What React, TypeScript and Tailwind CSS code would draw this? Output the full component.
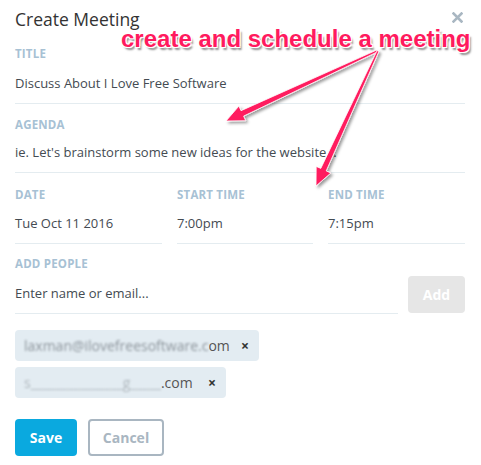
import React from "react";

const label = "text-[11.5px] font-bold uppercase text-[#a7c1d4] tracking-[0.2px] leading-none";
const value = "text-[13px] text-[#444b52] leading-none";

export default function App() {
  return (
    <div className="relative w-[481px] h-[465px] bg-white overflow-hidden font-['Open_Sans',sans-serif]">
      <div className="pl-[15px] pr-[16px] pt-[9px]">
        <div className="flex items-start justify-between">
          <div className="text-[17.5px] text-[#333] leading-[20px]">Create Meeting</div>
          <div className="mt-[3px] mr-[2px] text-[#a9b7c2]">
            <svg width="11" height="11" viewBox="0 0 11 11">
              <path d="M1.5 1.5 L9.5 9.5 M9.5 1.5 L1.5 9.5" stroke="#a9b7c2" strokeWidth="2.6" strokeLinecap="square" />
            </svg>
          </div>
        </div>

        <div className={`${label} mt-[19px]`}>Title</div>
        <div className={`${value} mt-[17px] pb-[13px] border-b border-[#e4ecf0]`}>Discuss About I Love Free Software</div>

        <div className={`${label} mt-[15px]`}>Agenda</div>
        <div className={`${value} mt-[16px] pb-[13px] border-b border-[#e4ecf0]`}>ie. Let's brainstorm some new ideas for the website...</div>

        <div className="flex mt-[16px]">
          <div className="w-[147px]">
            <div className={label}>Date</div>
            <div className={`${value} mt-[16px] pb-[13px] border-b border-[#e4ecf0]`}>Tue Oct 11 2016</div>
          </div>
          <div className="w-[136px] ml-[15px]">
            <div className={label}>Start Time</div>
            <div className={`${value} mt-[16px] pb-[13px] border-b border-[#e4ecf0]`}>7:00pm</div>
          </div>
          <div className="flex-1 ml-[15px]">
            <div className={label}>End Time</div>
            <div className={`${value} mt-[16px] pb-[13px] border-b border-[#e4ecf0]`}>7:15pm</div>
          </div>
        </div>

        <div className={`${label} mt-[14px]`}>Add People</div>
        <div className="flex items-end mt-[4px]">
          <div className={`${value} w-[383px] pt-[14px] pb-[13px] border-b border-[#e4ecf0] text-[#4a5259]`}>Enter name or email...</div>
          <div className="ml-[10px] w-[57px] h-[37px] rounded-[4px] bg-[#e6e6e6] text-white text-[14px] font-bold flex items-center justify-center mb-[1px]">Add</div>
        </div>

        <div className="mt-[16px] flex flex-col items-start gap-[6px]">
          <div className="h-[31px] w-[244px] rounded-[4px] bg-[#e3ecf2] flex items-center pl-[9px] pr-[10px]">
            <span className="whitespace-nowrap text-[14px] text-[#8d959c] blur-[0.8px]">laxman@ilovefreesoftware.c</span>
            <span className="text-[14px] text-[#555]">om</span>
            <span className="ml-auto text-[14px] font-bold text-[#333]">×</span>
          </div>
          <div className="h-[31px] w-[211px] rounded-[4px] bg-[#e3ecf2] flex items-center pl-[9px] pr-[10px]">
            <span className="whitespace-nowrap text-[14px] text-[#b0b8be] blur-[1.2px]">s_______________g_____</span>
            <span className="text-[14px] text-[#555]">.com</span>
            <span className="ml-auto text-[14px] font-bold text-[#333]">×</span>
          </div>
        </div>

        <div className="flex mt-[21px] gap-[11px]">
          <div className="w-[62px] h-[37px] rounded-[4px] bg-[#0aa9df] text-white text-[14px] font-bold flex items-center justify-center">Save</div>
          <div className="w-[76px] h-[37px] rounded-[4px] border-2 border-[#a9b6c1] text-[#a9b6c1] text-[14px] font-bold flex items-center justify-center">Cancel</div>
        </div>
      </div>

      <div className="absolute left-[121px] top-[25px] text-[24px] font-bold text-[#ff1a5e] font-['Liberation_Sans',Arial,sans-serif] leading-[28px] whitespace-nowrap [text-shadow:-1px_-1px_0_#fff,1px_-1px_0_#fff,-1px_1px_0_#fff,1px_1px_0_#fff,2px_3px_2px_rgba(0,0,0,0.45)]">
        create and schedule a meeting
      </div>

      <svg className="absolute left-0 top-0 pointer-events-none" width="481" height="465">
        <defs>
          <filter id="sh" x="-20%" y="-20%" width="140%" height="140%">
            <feDropShadow dx="2" dy="2" stdDeviation="1.5" floodColor="#000" floodOpacity="0.4" />
          </filter>
        </defs>
        <g fill="#ff1a5e" stroke="#fff" strokeWidth="0.8" filter="url(#sh)">
          <polygon points="377.4,51.9 243.6,116.1 245.7,120.7 226,121 238.9,106.1 241,110.7 376.6,50.1" />
          <polygon points="378.9,51.4 326.2,170.9 330.8,173 316,186 316.2,166.4 320.8,168.4 377.1,50.6" />
        </g>
      </svg>
    </div>
  );
}
